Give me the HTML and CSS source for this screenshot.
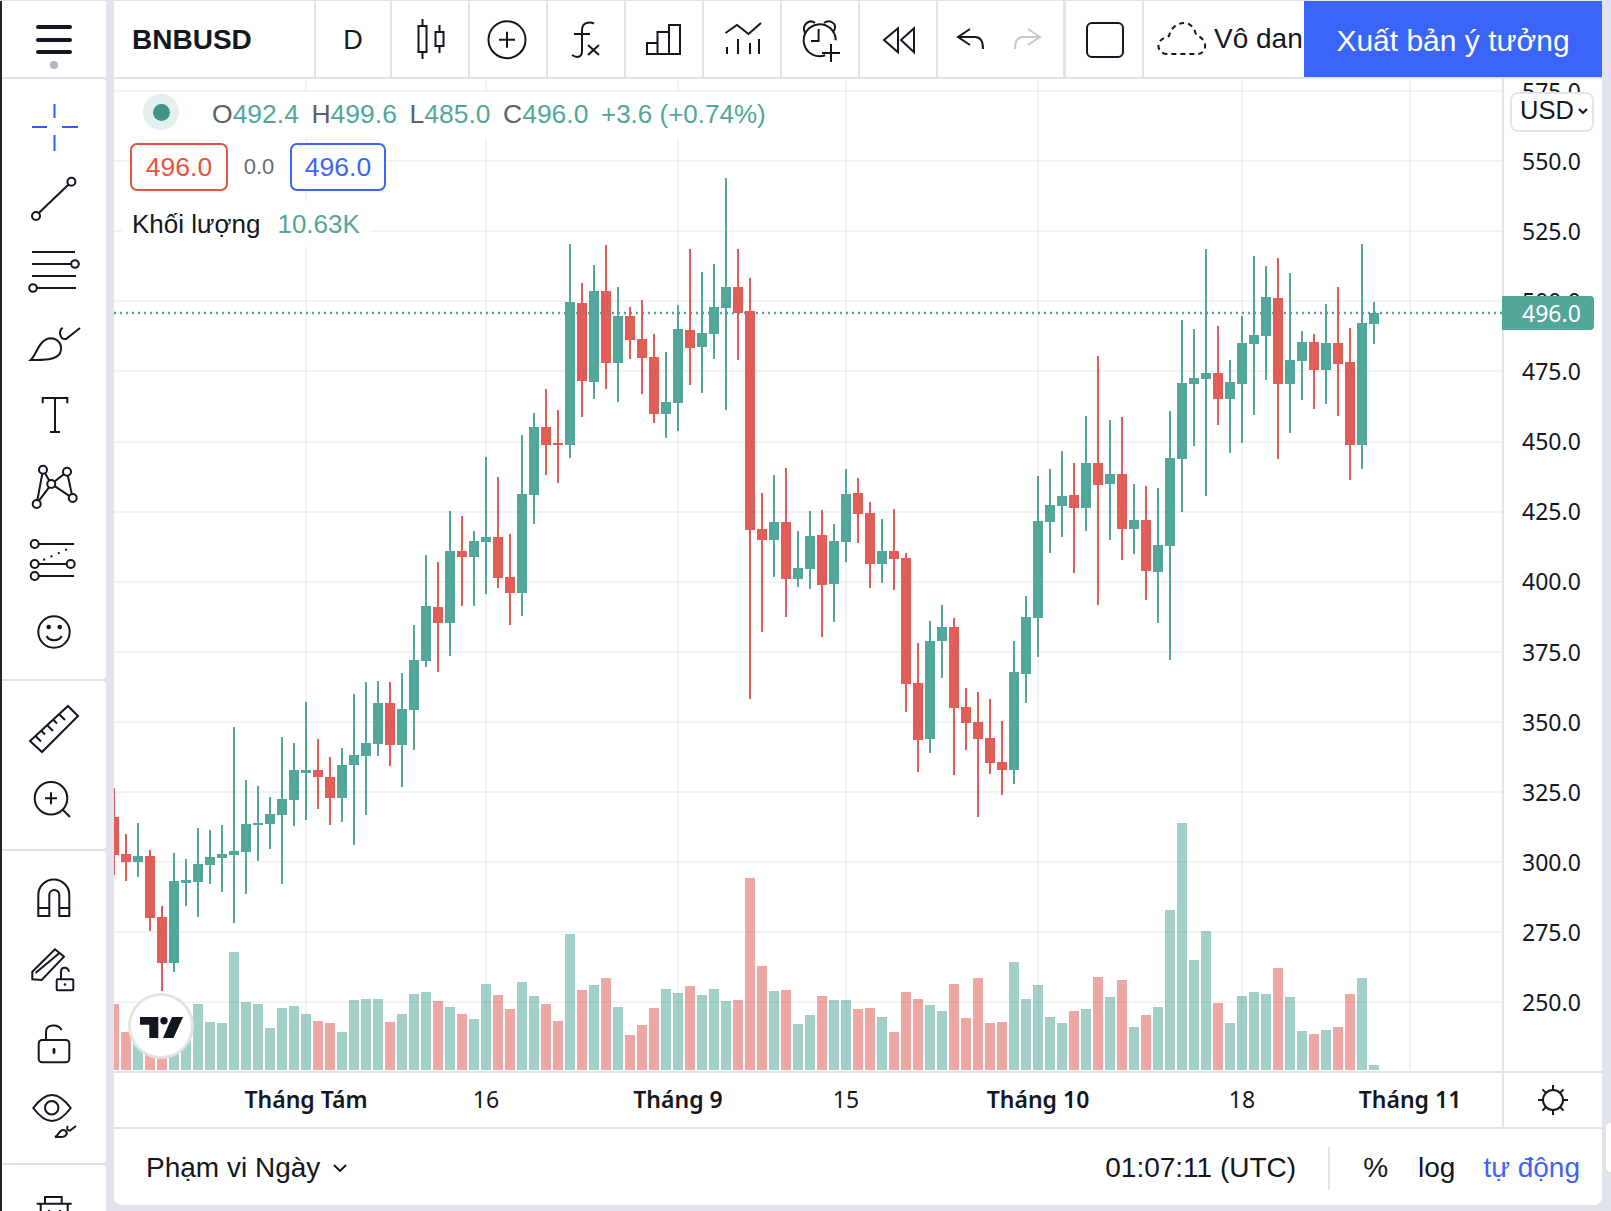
FILE: index.html
```html
<!DOCTYPE html>
<html lang="vi">
<head>
  <meta charset="UTF-8">
  <meta name="viewport" content="width=device-width, initial-scale=1.0">
  <title>BNBUSD</title>
  <link rel="stylesheet" href="styles.css">
</head>
<body>

<div class="app">
  <!-- left drawing tools -->
  <aside class="sidebar">
    <div class="side-head">
      <svg class="menu-icon" viewBox="0 0 48 48"><path d="M8 11H40M8 24H40M8 36H40"/></svg>
      <span class="menu-dot"></span>
    </div>

    <div class="side-group group-a">
      <div class="tool"><svg class="ico blue" viewBox="0 0 48 48"><path d="M2 24H17M32 24H48M24.5 1V15M24.5 32V48"/></svg></div>
      <div class="tool"><svg class="ico" viewBox="0 0 48 48"><circle cx="6" cy="41" r="4"/><circle cx="41.4" cy="6.7" r="4"/><path d="M8.8 38L38.6 9.5"/></svg></div>
      <div class="tool"><svg class="ico" viewBox="0 0 48 48"><circle cx="45" cy="17" r="3.8"/><circle cx="3" cy="41" r="3.8"/><path d="M2 5H45M2 17H41M2 29H46M7 41H46"/></svg></div>
      <div class="tool"><svg class="ico" viewBox="0 0 48 48"><path d="M.7 41C6.7 36 8.3 21 20 19.3C28.3 19.3 33.3 26 30 34.3C26.7 41 13.3 41 .7 41Z"/><path d="M32.7 8.7C28 12 30 21 36 20L50 9"/></svg></div>
      <div class="tool"><svg class="ico" viewBox="0 0 48 48"><path d="M12.7 12.3V7H37.3V12.3M25 7V41M20 41H30"/></svg></div>
      <div class="tool"><svg class="ico" viewBox="0 0 48 48"><circle cx="13" cy="6.7" r="4"/><circle cx="37" cy="8.7" r="4"/><circle cx="21.3" cy="21" r="4"/><circle cx="42.7" cy="35" r="4"/><circle cx="6.7" cy="41" r="4"/><path d="M7.4 37L12.3 10.6M15 10.2L19.3 17.5M24.5 18.5L33.8 11.2M37.9 12.6L41.8 31.1M24.7 23.2L39.3 32.8M9 37.7L19 24.3"/></svg></div>
      <div class="tool"><svg class="ico" viewBox="0 0 48 48"><circle cx="4.7" cy="9" r="4"/><circle cx="4.7" cy="29" r="4"/><circle cx="40.7" cy="29" r="4"/><circle cx="4.7" cy="41" r="4"/><path d="M8.7 9H44M8.7 29H36.7M8.7 41H44"/><path class="dots" d="M13.3 25L40 13"/></svg></div>
      <div class="tool"><svg class="ico" viewBox="0 0 48 48"><circle cx="24" cy="25" r="15.7"/><path d="M16.7 29C19 34.5 29 34.5 31.7 29"/><circle class="solid" cx="18.7" cy="20" r="2.3"/><circle class="solid" cx="29.7" cy="20" r="2.3"/></svg></div>
    </div>

    <div class="side-group group-b">
      <div class="tool"><svg class="ico" viewBox="0 0 48 48"><path d="M38 1L48 11L12 47L0 36Z"/><path d="M5.5 31L11 36.5M11.5 26L15 29.5M17.5 20.5L23 26M23.5 15L27 18.5M29.5 9.5L35 15"/></svg></div>
      <div class="tool"><svg class="ico" viewBox="0 0 48 48"><circle cx="21" cy="21.3" r="16.3"/><path d="M15 21.3H27M21 15.3V27.3M33 33L40 40"/></svg></div>
    </div>

    <div class="side-group group-c">
      <div class="tool"><svg class="ico" viewBox="0 0 48 48"><path d="M8.3 42V21A15.5 15.5 0 0 1 39.3 21V42H29.3V21A5 5 0 0 0 19.3 21V42ZM8.3 34H19.3M29.3 34H39.3"/></svg></div>
      <div class="tool"><svg class="ico" viewBox="0 0 48 48"><path d="M2.3 25.7L25 3.3L34 10.7L11.7 34L2.3 33.3ZM5.5 27L29.5 7"/><rect x="26.7" y="33.3" width="16.6" height="11" rx="1"/><path d="M31 33V26C31 20.5 38 20.5 39 25.7"/><circle class="solid" cx="35" cy="38.5" r="1.3"/></svg></div>
      <div class="tool"><svg class="ico" viewBox="0 0 48 48"><rect x="8.7" y="22" width="30.6" height="22.3" rx="3.5"/><path d="M16 22V14C16 6 28 5.5 31.7 12"/><rect class="solid" x="22.6" y="30" width="2.8" height="6" rx="1.4"/></svg></div>
      <div class="tool"><svg class="ico" viewBox="0 0 48 48"><path d="M3.3 18C10 9 16 5 22 5C28 5 34 9 40.7 18C34 27 28 31 22 31C16 31 10 27 3.3 18Z"/><circle cx="21.7" cy="17.7" r="6.7"/><path d="M25 47C29 45 29 40 33 40C37 40 38 44 35 46C33 47.5 29 47 25 47ZM38 36C36 38 37.5 41 40 40.5L46 36"/></svg></div>
    </div>

    <div class="side-group group-d">
      <div class="tool"><svg class="ico" viewBox="0 0 48 48"><path d="M15 14.7V8H31.7V14.7M6.7 14.7H41.7M10.7 14.7V46H37.7V14.7"/><circle class="solid" cx="19" cy="22" r="1.2"/><circle class="solid" cx="30" cy="22" r="1.2"/></svg></div>
    </div>
  </aside>

  <main class="workspace">
    <!-- top toolbar -->
    <header class="topbar">
      <div class="cell symbol">BNBUSD</div>
      <div class="cell interval">D</div>
      <div class="cell std"><svg class="ico" viewBox="0 0 48 48"><path d="M12.5 11H20.5V37H12.5ZM16.5 4V11M16.5 37V44M29.5 17H37.5V31H29.5ZM33.5 10V17M33.5 31V38"/></svg></div>
      <div class="cell std"><svg class="ico" viewBox="0 0 48 48"><circle cx="23" cy="24.7" r="18.5"/><path d="M15 24.7H31M23 16.7V32.7"/></svg></div>
      <div class="cell std"><svg class="ico" viewBox="0 0 48 48"><path d="M32 8.5C27 6 20 8 20 15V36C20 43 14 43 10 40M12 19H28M26 30L37 40M37 30L26 40"/></svg></div>
      <div class="cell std"><svg class="ico" viewBox="0 0 48 48"><path d="M7 39V28H17.5V39ZM17.5 28V17H29V39M29 17V10H40V39H7"/></svg></div>
      <div class="cell std"><svg class="ico" viewBox="0 0 48 48"><path d="M7.5 18L19 10L30.5 19L43 8M9 39V32M20 39V24M32 39V28M41 39V24"/></svg></div>
      <div class="cell std"><svg class="ico" viewBox="0 0 48 48"><path d="M39.7 25.3A16 16 0 1 0 29.2 40.3M9 18C5 9 14 4 19 8M28 8C33 4 42 8 38 16M22.6 14V26H15M35 29V47M26 38H44"/></svg></div>
      <div class="cell std"><svg class="ico" viewBox="0 0 48 48"><path d="M24 13.3L10 25L24 37.3ZM40 13.3L27 25L40 37.3Z"/></svg></div>
      <div class="cell history">
        <svg class="ico" viewBox="0 0 48 48"><path d="M23 14L11 22L23 30M11 22H28C33 22 36 26 36 34"/></svg>
        <svg class="ico muted" viewBox="0 0 48 48"><path d="M25 14L37 22L25 30M37 22H20C15 22 12 26 12 34"/></svg>
      </div>
      <div class="cell square"><svg class="ico" viewBox="0 0 48 48"><rect x="7" y="8" width="36" height="34" rx="5"/></svg></div>
      <div class="cell layout-name">
        <svg class="ico cloud" viewBox="0 0 48 48"><path d="M9 39C2 39 -1 32 1 28C3 23 9 22 11 21C13 12 20 8 26 8C33 8 37 14 38 20C44 22 48 27 47 32C46 37 43 39 40 39Z"/></svg>
        <span>Vô danh</span>
      </div>
      <button class="publish">Xuất bản ý tưởng</button>
    </header>

    <div class="chart-pane">
      <div class="plot" id="plot">
        <svg id="candles" width="1388" height="992"></svg>

        <!-- symbol values over the plot -->
        <div class="legend">
          <div class="legend-row row-ohlc">
            <span class="status"><i></i></span>
            <span class="pair"><b>O</b>492.4</span>
            <span class="pair"><b>H</b>499.6</span>
            <span class="pair"><b>L</b>485.0</span>
            <span class="pair"><b>C</b>496.0</span>
            <span class="pair change">+3.6 (+0.74%)</span>
          </div>
          <div class="legend-row row-quote">
            <span class="quote sell">496.0</span>
            <span class="spread">0.0</span>
            <span class="quote buy">496.0</span>
          </div>
          <div class="legend-row row-volume">
            <span class="vol-name">Khối lượng</span>
            <span class="vol-value">10.63K</span>
          </div>
        </div>

        <div class="brand">
          <svg viewBox="0 0 44 22" width="44" height="22"><path d="M0 0H18.3V21H9.3V7.7H0Z"/><circle cx="24" cy="3.7" r="3.7"/><path d="M43 0H32L23 21H33.5Z"/></svg>
        </div>
      </div>

      <div class="price-axis" id="priceAxis"></div>
      <div class="currency">USD<svg viewBox="0 0 10 6" width="10" height="6"><path d="M1 1L5 5L9 1"/></svg></div>
      <div class="last-price">496.0</div>
    </div>

    <div class="time-row">
      <div class="time-axis" id="timeAxis"></div>
      <div class="settings">
        <svg class="ico" viewBox="0 0 48 48"><circle cx="24" cy="24" r="10"/><path d="M24 9V14M24 34V39M9 24H14M34 24H39M13.4 13.4L17 17M31 31L34.6 34.6M34.6 13.4L31 17M17 31L13.4 34.6"/></svg>
      </div>
    </div>

    <footer class="bottombar">
      <div class="range">Phạm vi Ngày<svg viewBox="0 0 14 8" width="14" height="8"><path d="M1 1L7 7L13 1"/></svg></div>
      <div class="bottom-right">
        <span class="clock">01:07:11 (UTC)</span>
        <span class="bar-sep"></span>
        <span class="percent">%</span>
        <span class="log">log</span>
        <span class="auto">tự động</span>
      </div>
    </footer>
  </main>
  <div class="side-tab"></div>
</div>

<script src="chart.js"></script>
</body>
</html>
```

FILE: styles.css
```css
* {
  box-sizing: border-box;
}
body {
  margin: 0;
  background: #e0e3eb;
  font-family: "Liberation Sans", Arial, sans-serif;
  color: #131722;
}
.app {
  position: relative;
  display: flex;
  width: 1611px;
  height: 1211px;
  overflow: hidden;
  border-top: 1px solid #e0e3eb;
}
.ico {
  width: 48px;
  height: 48px;
  flex: none;
  overflow: visible;
  fill: none;
  stroke: #131722;
  stroke-width: 2;
}
.ico .solid {
  fill: #131722;
  stroke: none;
}
.ico .dots {
  stroke-dasharray: 2 6;
}
.ico.blue {
  stroke: #2f5ffa;
}
.ico.muted {
  stroke: #c6c8cd;
}
.ico.cloud {
  stroke-dasharray: 5 4;
}

/* left tools */
.sidebar {
  flex: none;
  width: 106px;
  height: 100%;
  border-left: 2px solid #232323;
  display: flex;
  flex-direction: column;
  gap: 2px;
}
.side-head {
  height: 76px;
  flex: none;
  background: #fff;
  position: relative;
  display: flex;
  justify-content: center;
}
.menu-icon {
  width: 48px;
  height: 48px;
  margin-top: 15px;
  fill: none;
  stroke: #131722;
  stroke-width: 4;
  stroke-linecap: round;
}
.menu-dot {
  position: absolute;
  left: 48px;
  top: 60px;
  width: 8px;
  height: 8px;
  border-radius: 50%;
  background: #b2b5be;
}
.side-group {
  background: #fff;
  flex: none;
  border-radius: 0 4px 4px 0;
}
.group-a {
  height: 600px;
  padding-top: 12px;
}
.group-b {
  height: 168px;
  padding-top: 12px;
}
.group-c {
  height: 312px;
  padding-top: 11px;
}
.group-d {
  flex: 1;
  padding-top: 12px;
}
.tool {
  height: 72px;
  display: flex;
  align-items: center;
  justify-content: center;
}

/* main column */
.workspace {
  width: 1488px;
  margin-left: 8px;
  height: 1204px;
  display: flex;
  flex-direction: column;
  background: #e0e3eb;
  border-radius: 0 0 8px 8px;
  overflow: hidden;
}
.topbar {
  height: 76px;
  flex: none;
  display: flex;
  background: #fff;
}
.cell {
  height: 100%;
  display: flex;
  align-items: center;
  justify-content: center;
  border-right: 2px solid #e0e3eb;
}
.symbol {
  width: 202px;
  justify-content: flex-start;
  padding: 2px 0 0 18px;
  font-size: 28px;
  font-weight: bold;
}
.interval {
  width: 76px;
  padding-top: 2px;
  font-size: 27px;
}
.std {
  width: 78px;
}
.history {
  width: 128px;
  gap: 8px;
  padding-right: 3px;
  border-right-width: 3px;
}
.square {
  width: 78px;
}
.layout-name {
  width: 160px;
  border-right: 0;
  justify-content: flex-start;
  padding-left: 14px;
  gap: 8px;
  font-size: 28px;
  overflow: hidden;
  white-space: nowrap;
}
.publish {
  flex: 1;
  border: 0;
  background: #3b65f8;
  color: #fff;
  font-family: inherit;
  font-size: 30px;
  padding: 4px 0 0;
}

.chart-pane {
  position: relative;
  margin-top: 2px;
  height: 992px;
  flex: none;
  display: flex;
  background: #fff;
  overflow: hidden;
}
.plot {
  position: relative;
  width: 1390px;
  height: 100%;
  border-right: 2px solid #e0e3eb;
  overflow: hidden;
}
#candles {
  display: block;
}
.legend {
  position: absolute;
  left: 8px;
  top: 13px;
  display: flex;
  flex-direction: column;
  align-items: flex-start;
}
.legend-row {
  display: flex;
  align-items: center;
  background: #fff;
}
.row-ohlc {
  height: 47px;
  padding: 0 5px 2px 21px;
  font-size: 26.5px;
  color: #53a69a;
}
.status {
  width: 36px;
  height: 36px;
  border-radius: 50%;
  background: #e3f0ee;
  display: flex;
  align-items: center;
  justify-content: center;
  margin-right: 33px;
  margin-top: -5px;
}
.status i {
  display: block;
  width: 17px;
  height: 17px;
  border-radius: 50%;
  background: #3f9688;
}
.pair {
  margin-right: 12.5px;
}
.pair.change {
  margin-right: 0;
  font-size: 26px;
}
.pair b {
  font-weight: normal;
  color: #5d606b;
}
.row-quote {
  margin: 4px 0 0 8px;
  height: 48px;
  font-size: 26.5px;
}
.quote {
  height: 48px;
  border: 2px solid;
  border-radius: 7px;
  display: flex;
  align-items: center;
  justify-content: center;
}
.sell {
  width: 98px;
  color: #e4543f;
  border-color: #e4543f;
}
.buy {
  width: 96px;
  color: #3b65f8;
  border-color: #3b65f8;
}
.spread {
  width: 62px;
  text-align: center;
  font-size: 22px;
  color: #666a74;
}
.row-volume {
  margin-top: 10px;
  height: 46px;
  padding: 0 10px;
  font-size: 26px;
  gap: 17px;
}
.vol-value {
  color: #53a69a;
}
.brand {
  position: absolute;
  left: 14px;
  top: 914px;
  width: 66px;
  height: 66px;
  border-radius: 50%;
  background: #fff;
  border: 3px solid rgba(222, 222, 222, 0.85);
  display: flex;
  align-items: center;
  justify-content: center;
}
.brand svg {
  fill: #131722;
  margin: 3px 0 0 2px;
}

/* price scale */
.price-axis {
  position: relative;
  flex: 1;
  height: 100%;
  font-family: "Noto Sans", sans-serif;
  font-size: 23px;
}
.tick-price {
  position: absolute;
  left: 18px;
  line-height: 30px;
  height: 30px;
  margin-top: -15px;
}
.currency {
  position: absolute;
  left: 1396px;
  top: 13px;
  width: 84px;
  height: 40px;
  background: #fff;
  border: 2px solid #e0e3eb;
  border-radius: 8px;
  display: flex;
  align-items: center;
  padding: 0 0 3px 8px;
  gap: 4px;
  font-size: 25.5px;
}
.currency svg,
.range svg {
  fill: none;
  stroke: #131722;
  stroke-width: 2;
}
.last-price {
  position: absolute;
  left: 1388px;
  top: 217px;
  width: 92px;
  height: 34px;
  line-height: 34px;
  background: #53a69a;
  border-radius: 0 4px 4px 0;
  color: #fff;
  padding-left: 20px;
  font-family: "Noto Sans", sans-serif;
  font-size: 23px;
}

/* time scale */
.time-row {
  margin-top: 2px;
  height: 54px;
  flex: none;
  display: flex;
  background: #fff;
}
.time-axis {
  position: relative;
  width: 1388px;
  font-family: "Noto Sans", sans-serif;
  font-size: 23px;
}
.tick-time {
  position: absolute;
  top: 0;
  line-height: 52px;
  transform: translateX(-50%);
  white-space: nowrap;
}
.tick-time.major {
  font-weight: 600;
}
.settings {
  flex: 1;
  border-left: 2px solid #e0e3eb;
  display: flex;
  align-items: center;
  justify-content: center;
}

/* range and scale switches */
.bottombar {
  margin-top: 2px;
  flex: 1;
  background: #fff;
  display: flex;
  align-items: center;
  justify-content: space-between;
  padding: 2px 22px 0 32px;
  font-size: 28px;
}
.range {
  display: flex;
  align-items: center;
  gap: 13px;
}
.bottom-right {
  display: flex;
  align-items: center;
}
.bar-sep {
  width: 2px;
  height: 43px;
  background: #e0e3eb;
  margin: 0 33px 0 32px;
}
.log {
  margin-left: 30px;
}
.auto {
  margin-left: 28px;
  color: #3b65f8;
}
.side-tab {
  position: absolute;
  right: 0;
  top: 1122px;
  width: 5px;
  height: 49px;
  background: #fff;
  border-radius: 8px 0 0 8px;
}
```

FILE: chart.js
```js
// one row per day: high, body top, body bottom, low, up/down, volume top (all in page px)
const bars = [
  [788,817,855,875,0,1004],[834,854,862,881,0,1032],[823,856,862,877,1,1020],[850,856,918,931,0,1040],
  [906,917,963,991,0,1030],[853,881,963,972,1,1010],[859,880,883,906,1,1030],[828,864,882,917,1,1004],
  [830,857,865,884,1,1022],[825,854,858,892,1,1023],[727,851,855,923,1,952],[780,824,852,894,1,1002],
  [786,823,825,861,1,1004],[797,814,824,849,1,1028],[737,799,815,884,1,1008],[743,770,800,826,1,1006],
  [702,770,773,820,1,1014],[739,770,777,809,0,1021],[757,777,798,825,0,1023],[748,765,798,822,1,1032],
  [694,755,765,845,1,1000],[682,743,756,815,1,999],[681,703,744,756,1,999],[682,703,745,766,0,1022],
  [673,709,745,787,1,1014],[625,660,710,750,1,994],[555,606,661,667,1,992],[562,607,623,672,0,1001],
  [511,551,623,656,1,1007],[516,551,557,606,0,1014],[531,541,557,606,1,1019],[457,537,542,594,1,984],
  [477,537,578,588,0,995],[534,577,593,625,0,1009],[435,494,593,616,1,982],[413,427,495,524,1,996],
  [389,427,445,475,0,1004],[410,443,445,483,0,1021],[244,302,445,458,1,934],[283,303,381,417,0,990],
  [265,291,382,399,1,985],[245,291,363,389,0,978],[287,316,363,402,1,1007],[307,316,340,359,0,1035],
  [300,339,358,394,0,1025],[334,357,414,423,0,1008],[352,402,414,438,1,989],[305,329,403,431,1,993],
  [249,330,348,385,0,986],[272,333,347,393,1,995],[264,307,334,359,1,989],[178,287,308,410,1,1001],
  [249,287,313,360,0,1000],[278,311,530,699,0,878],[493,529,540,632,0,966],[475,522,540,577,1,991],
  [468,522,579,617,0,990],[531,568,579,587,1,1024],[511,536,569,589,1,1015],[510,535,585,637,0,996],
  [524,541,584,622,1,1000],[469,494,542,562,1,1000],[478,493,514,543,0,1009],[502,513,564,588,0,1008],
  [519,551,564,583,1,1017],[509,551,559,590,0,1032],[553,558,684,712,0,992],[643,683,740,772,0,999],
  [621,641,739,753,1,1005],[605,627,641,678,1,1011],[618,627,708,775,0,984],[688,707,723,750,0,1018],
  [692,722,739,817,0,978],[699,738,763,774,0,1023],[721,762,770,795,0,1022],[641,672,770,784,1,962],
  [596,617,674,703,1,999],[476,521,618,657,1,985],[469,505,522,553,1,1017],[451,496,506,537,1,1023],
  [463,495,508,573,0,1011],[416,463,508,531,1,1009],[356,463,485,605,0,977],[420,474,484,540,1,997],
  [417,474,529,560,0,980],[484,520,529,554,1,1027],[486,520,571,600,0,1015],[488,545,572,623,1,1007],
  [411,458,546,660,1,910],[320,383,459,512,1,823],[329,378,384,446,1,960],[249,373,379,496,1,931],
  [326,373,399,425,0,1003],[360,382,399,453,1,1023],[316,343,384,443,1,996],[256,335,344,415,1,992],
  [266,297,336,380,1,994],[258,298,384,459,0,968],[273,360,384,433,1,997],[331,342,361,400,1,1031],
  [334,342,370,409,0,1034],[304,343,370,404,1,1030],[287,343,364,416,0,1027],[328,362,445,480,0,994],
  [244,323,445,469,1,978],[302,313,324,344,1,1065]
];

const PLOT_X = 114, PLOT_Y = 79;
const UP = '#53a69a', DOWN = '#e05e57';
const NS = 'http://www.w3.org/2000/svg';
const svg = document.getElementById('candles');

function add(tag, attrs) {
  const el = document.createElementNS(NS, tag);
  for (const k in attrs) el.setAttribute(k, attrs[k]);
  svg.appendChild(el);
}
function box(x, y, w, h, fill, opacity) {
  add('rect', { x: x - PLOT_X, y: y - PLOT_Y, width: w, height: h, fill: fill, 'fill-opacity': opacity || 1 });
}

// grid
const gridY = [91, 161, 231, 301, 371, 442, 512, 582, 652, 722, 792, 862, 932, 1002];
const gridX = [306, 486, 678, 846, 1038, 1242, 1410];
gridY.forEach(y => box(PLOT_X, y - 1, 1388, 2, '#f2f3f3'));
gridX.forEach(x => box(x - 1, PLOT_Y, 2, 991, '#dcdee0', 0.4));

// volume sits under the candles
bars.forEach((b, i) => {
  const cx = PLOT_X + 12 * i;
  box(cx - 5, b[5], 10, 1070 - b[5], b[4] ? UP : DOWN, 0.54);
});

// last price line
add('line', { x1: 0, x2: 1388, y1: 234, y2: 234, stroke: UP, 'stroke-width': 2.5, 'stroke-dasharray': '2 4' });

bars.forEach((b, i) => {
  const cx = PLOT_X + 12 * i;
  const color = b[4] ? UP : DOWN;
  box(cx - 1, b[0], 2, b[3] - b[0], color);
  box(cx - 5, b[1], 10, Math.max(b[2] - b[1], 2), color);
});

// price labels, 25.0 apart
const labelY = [91, 161, 231, 301, 371, 441, 511, 581, 652, 722, 792, 862, 932, 1002];
const axis = document.getElementById('priceAxis');
labelY.forEach((y, i) => {
  const label = document.createElement('div');
  label.className = 'tick-price';
  label.style.top = (y - PLOT_Y) + 'px';
  label.textContent = (575 - 25 * i).toFixed(1);
  axis.appendChild(label);
});

// date labels under their grid lines
const ticks = [
  [306, 'Tháng Tám', true], [486, '16', false], [678, 'Tháng 9', true], [846, '15', false],
  [1038, 'Tháng 10', true], [1242, '18', false], [1410, 'Tháng 11', true]
];
const timeAxis = document.getElementById('timeAxis');
ticks.forEach(t => {
  const label = document.createElement('span');
  label.className = t[2] ? 'tick-time major' : 'tick-time';
  label.style.left = (t[0] - PLOT_X) + 'px';
  label.textContent = t[1];
  timeAxis.appendChild(label);
});
```
